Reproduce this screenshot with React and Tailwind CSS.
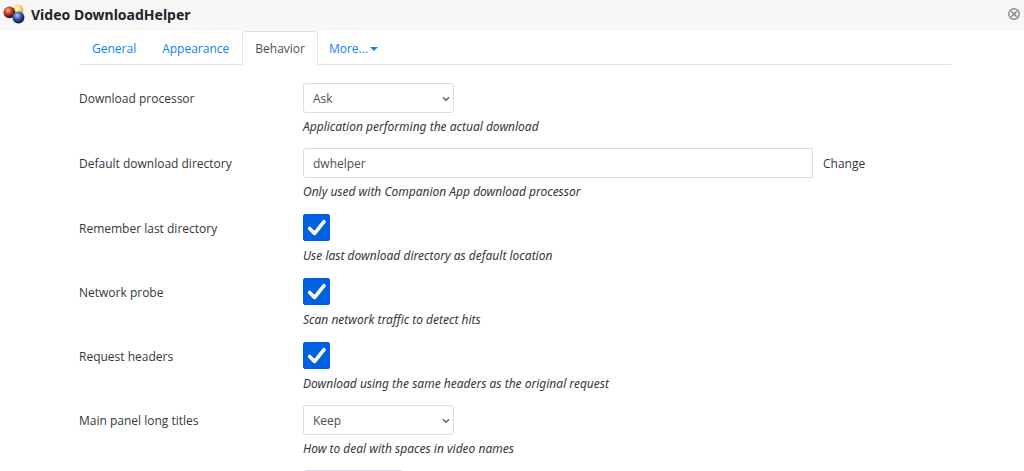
import { useState } from "react";

const tabs = ["General", "Appearance", "Behavior"];

const settings = [
  { id: "processor", label: "Download processor", type: "select", options: ["Ask", "Browser", "Companion App"], hint: "Application performing the actual download" },
  { id: "directory", label: "Default download directory", type: "text", value: "dwhelper", hint: "Only used with Companion App download processor" },
  { id: "remember", label: "Remember last directory", type: "checkbox", hint: "Use last download directory as default location" },
  { id: "probe", label: "Network probe", type: "checkbox", hint: "Scan network traffic to detect hits" },
  { id: "headers", label: "Request headers", type: "checkbox", hint: "Download using the same headers as the original request" },
  { id: "titles", label: "Main panel long titles", type: "select", options: ["Keep", "Shorten"], hint: "How to deal with spaces in video names" },
];

const Logo = () => (
  <svg className="w-[22px] h-5" viewBox="0 0 22 20" aria-hidden="true">
    <defs>
      <radialGradient id="yellow" cx="40%" cy="35%" r="65%">
        <stop offset="0" stopColor="#fffbe0" />
        <stop offset="0.5" stopColor="#f6dc70" />
        <stop offset="1" stopColor="#c8a43c" />
      </radialGradient>
      <radialGradient id="red" cx="38%" cy="32%" r="68%">
        <stop offset="0" stopColor="#f8b09c" />
        <stop offset="0.45" stopColor="#c8402c" />
        <stop offset="1" stopColor="#2c0a08" />
      </radialGradient>
      <radialGradient id="blue" cx="40%" cy="32%" r="68%">
        <stop offset="0" stopColor="#b4cdf8" />
        <stop offset="0.45" stopColor="#3a62b8" />
        <stop offset="1" stopColor="#080f2c" />
      </radialGradient>
    </defs>
    <circle cx="15" cy="6" r="5.4" fill="url(#yellow)" />
    <circle cx="6.4" cy="8.4" r="5.9" fill="url(#red)" />
    <circle cx="15.4" cy="13.6" r="6" fill="url(#blue)" />
  </svg>
);

const CloseIcon = () => (
  <svg className="w-3 h-3" viewBox="0 0 12 12" fill="none" stroke="#858585" aria-hidden="true">
    <circle cx="6" cy="6" r="5.2" strokeWidth="1.4" />
    <path d="M3.2 3.2l5.6 5.6M8.8 3.2l-5.6 5.6" strokeWidth="1.6" />
  </svg>
);

const Select = ({ id, options }) => (
  <div className="relative w-[151px] max-w-full">
    <select id={id} className="block w-full h-[30px] pt-[2px] pl-[9px] pr-6 appearance-none rounded-[3px] border border-[#d9dce3] bg-white text-[#495057]">
      {options.map((o) => (
        <option key={o}>{o}</option>
      ))}
    </select>
    <svg className="absolute right-1 top-3 w-2 h-2 pointer-events-none" viewBox="0 0 8 8" fill="none" stroke="#5a6067" strokeWidth="1.4" aria-hidden="true">
      <path d="M1 2.2l3 3 3-3" />
    </svg>
  </div>
);

const Checkbox = ({ id }) => (
  <div className="relative flex items-center h-[29px]">
    <input id={id} type="checkbox" defaultChecked className="peer appearance-none w-[27px] h-[27px] rounded-[2px] border border-[#0060df] bg-white checked:bg-[#0060df]" />
    <svg className="absolute left-0 w-[27px] h-[27px] pointer-events-none hidden peer-checked:block" viewBox="0 0 27 27" fill="none" stroke="#fff" strokeWidth="3.6" strokeLinecap="round" strokeLinejoin="round" aria-hidden="true">
      <path d="M6.6 14.4l5 5L21 7.6" />
    </svg>
  </div>
);

const Setting = ({ item }) => (
  <div className="grid grid-cols-[224px_1fr]">
    <label htmlFor={item.id} className="h-[30px] leading-[32px]">{item.label}</label>
    <div>
      {item.type === "select" && <Select id={item.id} options={item.options} />}
      {item.type === "checkbox" && <Checkbox id={item.id} />}
      {item.type === "text" && (
        <div className="flex">
          <input id={item.id} type="text" defaultValue={item.value} className="flex-1 min-w-0 h-[30px] px-[9px] rounded-l-[3px] border border-[#d9dce3] bg-white text-[#495057]" />
          <button type="button" className="w-[138px] pl-[10px] pt-[2px] text-left">Change</button>
        </div>
      )}
      <p className="mt-[5px] leading-[18px] font-['Noto_Sans',sans-serif] italic">{item.hint}</p>
    </div>
  </div>
);

const App = () => {
  const [active, setActive] = useState("Behavior");

  return (
    <div className="h-screen overflow-hidden bg-white font-['Open_Sans','Noto_Sans',sans-serif] text-[12px] text-[#33373b]">
      <header className="flex items-center h-[31px] pl-[3px] pb-[3px] bg-[#f7f7f7]">
        <Logo />
        <h1 className="ml-[6px] font-['Noto_Sans',sans-serif] text-[14px] font-bold text-[#212529]">Video DownloadHelper</h1>
        <button type="button" aria-label="Close" className="ml-auto p-1">
          <CloseIcon />
        </button>
      </header>

      <main className="ml-[79px] mr-[73px]">
        {/* Tabs */}
        <nav className="flex h-[34px] border-b border-[#dee2e6]">
          {tabs.map((tab) => (
            <button
              key={tab}
              type="button"
              onClick={() => setActive(tab)}
              className={`h-[34px] px-3 pt-px border rounded-t-[3px] ${active === tab ? "border-[#dee2e6] border-b-white bg-white text-[#495057]" : "border-transparent text-[#0c83f5]"}`}
            >
              {tab}
            </button>
          ))}
          <button type="button" className="flex items-center gap-[2px] h-[34px] px-[10px] pt-px border border-transparent text-[#0c83f5]">
            More...
            <span className="border-x-[4px] border-t-[4px] border-x-transparent border-t-[#0c83f5]" />
          </button>
        </nav>

        {/* Settings */}
        <form className="flex flex-col gap-[12px] pt-[18px]">
          {settings.map((item) => (
            <Setting key={item.id} item={item} />
          ))}
          <div className="grid grid-cols-[224px_1fr]">
            <span />
            <input type="number" aria-label="Limit" className="w-[101px] h-[30px] rounded-[3px] border border-[#d9dce3]" />
          </div>
        </form>
      </main>
    </div>
  );
};

export default App;
